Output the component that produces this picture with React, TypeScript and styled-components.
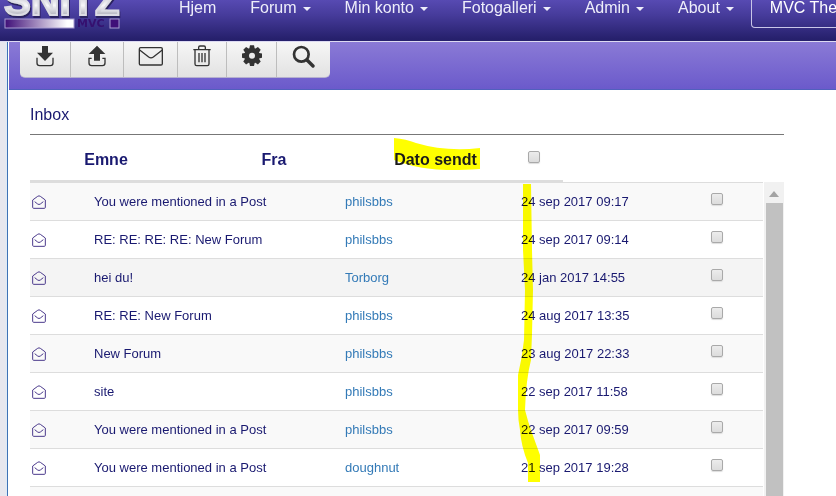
import React from "react";
import styled, { createGlobalStyle } from "styled-components";

const GlobalStyle = createGlobalStyle`
  * { box-sizing: border-box; }
  html, body { margin: 0; padding: 0; }
  body {
    background: #fff;
    color: #191970;
    font-family: "Liberation Sans", Arial, sans-serif;
    font-size: 13px;
    overflow: hidden;
  }
`;

const Page = styled.div`
  display: flex;
  flex-direction: column;
  height: 100vh;
  overflow: hidden;
`;

const NavBar = styled.nav`
  display: flex;
  align-items: flex-start;
  flex: none;
  height: 42px;
  overflow: hidden;
  background: linear-gradient(#574ab2, #473c9c 35%, #26206c 95%);
  border-bottom: 1px solid #dcdaf2;
`;

const Brand = styled.a`
  flex: none;
  width: 162px;
  height: 41px;
  svg { display: block; }
`;

const NavLink = styled.a`
  display: flex;
  align-items: center;
  flex: none;
  gap: 6px;
  padding: 0 17px;
  color: #eeeefa;
  font-size: 16px;
  line-height: 16px;
  text-decoration: none;
  white-space: nowrap;
`;

const Caret = styled.span`
  margin-top: 2px;
  border: 4px solid transparent;
  border-top-color: currentColor;
  border-bottom: 0;
`;

const ThemeButton = styled.button`
  flex: none;
  width: 120px;
  height: 28px;
  padding: 0 0 11px 18px;
  border: 1px solid #c9c6e8;
  border-top: 0;
  border-radius: 0 0 4px 4px;
  background: transparent;
  color: #fff;
  font: 16px/16px "Liberation Sans", Arial, sans-serif;
  text-align: left;
`;

const Frame = styled.div`
  display: flex;
  flex: 1;
  min-height: 0;
  padding-left: 7px;
  background: linear-gradient(90deg, #e7e7ee 5px, #dcebf8 7px);
`;

const Content = styled.main`
  display: flex;
  flex-direction: column;
  flex: 1;
  min-width: 0;
  background: #fff;
  border-left: 1px solid #3f72b5;
`;

const Band = styled.div`
  flex: none;
  height: 48px;
  margin-left: 1px;
  padding-left: 11px;
  background: linear-gradient(#8a7ad6, #6b5acb);
  border-bottom: 1px solid #5160bd;
`;

const Toolbar = styled.div`
  display: inline-flex;
  height: 36px;
  overflow: hidden;
  border-radius: 0 0 5px 5px;
  background: linear-gradient(#f6f6f6, #e2e2e2);
  border-bottom: 1px solid #b5b0cf;
`;

const ToolButton = styled.button<{ $width: number }>`
  display: flex;
  align-items: flex-start;
  justify-content: center;
  width: ${(p) => p.$width}px;
  padding: 3px 0 0;
  border: 0;
  border-right: 1px solid #bdbdbd;
  background: transparent;
  color: #333;
  &:last-child { border-right: 0; }
  svg { flex: none; }
`;

const Box = styled.section`
  display: flex;
  flex-direction: column;
  flex: 1;
  min-height: 0;
  padding: 15px 52px 0 22px;
`;

const Title = styled.h1`
  flex: none;
  margin: 0;
  padding-bottom: 9px;
  border-bottom: 1px solid #777;
  font-size: 16px;
  line-height: 20px;
  font-weight: 400;
`;

const HeadTable = styled.table`
  flex: none;
  width: 533px;
  table-layout: fixed;
  border-collapse: separate;
  border-spacing: 0;
`;

const HeadCell = styled.th<{ $width: number; $dark?: boolean }>`
  width: ${(p) => p.$width}px;
  height: 48px;
  padding: 4px 0 0;
  border-bottom: 3px solid #ddd;
  font-size: 16px;
  line-height: 20px;
  text-align: center;
  color: ${(p) => (p.$dark ? "#1a1a1a" : "inherit")};
`;

const Marked = styled.span`
  position: relative;
  display: inline-block;
  svg { position: absolute; left: 0; top: -12px; }
`;

const MarkedText = styled.span`
  position: relative;
`;

const CheckBox = styled.input.attrs({ type: "checkbox" })`
  appearance: none;
  display: block;
  width: 12px;
  height: 12px;
  margin: 0 auto 6px;
  border: 1px solid #a9a9a9;
  border-radius: 2px;
  background: linear-gradient(#ececec, #dcdcdc);
  box-shadow: 0 1px 1px #ddd;
`;

const Scroller = styled.div`
  position: relative;
  display: flex;
  flex: 1;
  min-height: 0;
  margin-top: -1px;
  overflow: hidden;
`;

const MailTable = styled.table`
  flex: 1;
  align-self: flex-start;
  min-width: 0;
  table-layout: fixed;
  border-collapse: separate;
  border-spacing: 0;
`;

const MailRow = styled.tr<{ $tone: string }>`
  background: ${(p) => p.$tone};
`;

const Cell = styled.td<{ $width?: number }>`
  width: ${(p) => (p.$width ? `${p.$width}px` : "auto")};
  height: 38px;
  padding: 1px 8px 0;
  border-top: 1px solid #ddd;
  line-height: 18px;
  white-space: nowrap;
  vertical-align: middle;
`;

const IconCell = styled(Cell)`
  padding: 1px 0 0 2px;
  svg { display: block; }
`;

const UserLink = styled.a`
  color: #337ab7;
  text-decoration: none;
`;

const DateStroke = styled.svg`
  position: absolute;
  left: 486px;
  top: 2px;
  mix-blend-mode: multiply;
  pointer-events: none;
`;

const ScrollTrack = styled.div`
  display: flex;
  flex-direction: column;
  flex: none;
  align-items: center;
  width: 20px;
  margin-left: 1px;
  background: #f1f1f1;
`;

const ScrollUp = styled.button`
  flex: none;
  display: flex;
  align-items: center;
  justify-content: center;
  width: 20px;
  height: 21px;
  padding: 2px 0 0;
  border: 0;
  background: transparent;
`;

const ScrollThumb = styled.div`
  flex: 1;
  width: 17px;
  background: #c1c1c1;
`;

const Logo = () => (
  <svg width="124" height="32" viewBox="0 0 124 32" role="img" aria-label="Snitz MVC">
    <defs>
      <linearGradient id="metal" x1="0" y1="0" x2="0" y2="1">
        <stop offset="0.3" stopColor="#bcbcc8" />
        <stop offset="0.6" stopColor="#f7f7f9" />
        <stop offset="0.8" stopColor="#b9b9c4" />
      </linearGradient>
      <linearGradient id="fade">
        <stop offset="0" stopColor="#3f0f78" />
        <stop offset="0.9" stopColor="#fff" />
      </linearGradient>
      <filter id="shade" x="-5%" y="-5%" width="115%" height="115%">
        <feDropShadow dx="1" dy="2" stdDeviation="0.6" floodColor="#2b2360" />
      </filter>
    </defs>
    <text x="4" y="15" fontFamily="Liberation Sans, Arial, sans-serif" fontWeight="700" fontSize="40" fill="url(#metal)" stroke="#dcdce4" strokeWidth="2" filter="url(#shade)">SNITZ</text>
    <rect x="5" y="19" width="69" height="9" fill="url(#fade)" stroke="#a79bd0" />
    <text x="77" y="27" fontFamily="DejaVu Sans, sans-serif" fontWeight="700" fontSize="11" fill="#35106f">MVC</text>
    <rect x="110" y="19" width="9" height="9" fill="#3f0f78" stroke="#a79bd0" />
  </svg>
);

const DownloadIcon = () => (
  <svg width="18" height="22" viewBox="0 0 54 66">
    <path d="M18 3h18v20h15L27 48 3 23h15z" fill="currentColor" />
    <path d="M3 38v16q0 8 8 8h32q8 0 8-8V38" fill="none" stroke="currentColor" strokeWidth="4" />
  </svg>
);

const UploadIcon = () => (
  <svg width="18" height="22" viewBox="0 0 54 66">
    <path d="M27 2l25 25H36v20H18V27H2z" fill="currentColor" />
    <path d="M11 40H3v14q0 8 8 8h32q8 0 8-8V40h-8" fill="none" stroke="currentColor" strokeWidth="4" />
  </svg>
);

const MailIcon = () => (
  <svg width="26" height="24" viewBox="0 0 78 72">
    <rect x="4" y="8" width="69" height="52" rx="4" fill="none" stroke="currentColor" strokeWidth="4" />
    <path d="M5 15l27 21q7 5 14 0l27-21" fill="none" stroke="currentColor" strokeWidth="4" />
  </svg>
);

const TrashIcon = () => (
  <svg width="18" height="24" viewBox="0 0 54 72" fill="none" stroke="currentColor" strokeWidth="4">
    <path d="M1 14h52M17 13V7q0-4 4-4h12q4 0 4 4v6M6 15v42q0 5 5 5h32q5 0 5-5V15M18 24v28M27 24v28M36 24v28" />
  </svg>
);

const GearIcon = () => (
  <svg width="20" height="24" viewBox="0 0 60 72">
    <g fill="currentColor">
      {[0, 45, 90, 135].map((a) => (
        <path key={a} d="M24 1h12l3 14v34l-3 14H24l-3-14V15z" transform={`rotate(${a} 30 32)`} />
      ))}
      <circle cx="30" cy="32" r="23" />
    </g>
    <circle cx="30" cy="32" r="9" fill="#ececec" />
  </svg>
);

const SearchIcon = () => (
  <svg width="23" height="24" viewBox="0 0 69 72" fill="none" stroke="currentColor">
    <circle cx="28" cy="28" r="22" strokeWidth="8" />
    <path d="M45 45l18 18" strokeWidth="10" strokeLinecap="round" />
  </svg>
);

const OpenMailIcon = () => (
  <svg width="14" height="14" viewBox="0 0 42 42" fill="none" stroke="#4b3a8c" strokeWidth="3">
    <path d="M2 15L17 4q4-3 8 0l15 11v22q0 3-3 3H5q-3 0-3-3z" />
    <path d="M8 20l9 7q4 3 8 0l9-7" />
  </svg>
);

const navItems = [
  { label: "Hjem", menu: false },
  { label: "Forum", menu: true },
  { label: "Min konto", menu: true },
  { label: "Fotogalleri", menu: true },
  { label: "Admin", menu: true },
  { label: "About", menu: true },
];

const tools = [
  { name: "Download", width: 51, Icon: DownloadIcon },
  { name: "Upload", width: 53, Icon: UploadIcon },
  { name: "New message", width: 54, Icon: MailIcon },
  { name: "Delete", width: 49, Icon: TrashIcon },
  { name: "Settings", width: 50, Icon: GearIcon },
  { name: "Search", width: 53, Icon: SearchIcon },
];

const messages = [
  { subject: "You were mentioned in a Post", from: "philsbbs", date: "24 sep 2017 09:17" },
  { subject: "RE: RE: RE: RE: New Forum", from: "philsbbs", date: "24 sep 2017 09:14" },
  { subject: "hei du!", from: "Torborg", date: "24 jan 2017 14:55", active: true },
  { subject: "RE: RE: New Forum", from: "philsbbs", date: "24 aug 2017 13:35" },
  { subject: "New Forum", from: "philsbbs", date: "23 aug 2017 22:33" },
  { subject: "site", from: "philsbbs", date: "22 sep 2017 11:58" },
  { subject: "You were mentioned in a Post", from: "philsbbs", date: "22 sep 2017 09:59" },
  { subject: "You were mentioned in a Post", from: "doughnut", date: "21 sep 2017 19:28" },
];

const rowTone = (index: number, active?: boolean) =>
  active ? "#f4f4f4" : index % 2 === 0 ? "#f9f9f9" : "#fff";

export default function App() {
  return (
    <Page>
      <GlobalStyle />
      <NavBar>
        <Brand href="#"><Logo /></Brand>
        {navItems.map((item) => (
          <NavLink key={item.label} href="#">
            {item.label}
            {item.menu && <Caret />}
          </NavLink>
        ))}
        <ThemeButton>MVC The</ThemeButton>
      </NavBar>
      <Frame>
        <Content>
          <Band>
            <Toolbar>
              {tools.map(({ name, width, Icon }) => (
                <ToolButton key={name} $width={width} aria-label={name}><Icon /></ToolButton>
              ))}
            </Toolbar>
          </Band>
          <Box>
            <Title>Inbox</Title>
            <HeadTable>
              <thead>
                <tr>
                  <HeadCell $width={152}>Emne</HeadCell>
                  <HeadCell $width={184}>Fra</HeadCell>
                  <HeadCell $width={139} $dark>
                    <Marked>
                      <svg width="86" height="32" viewBox="0 0 86 32">
                        <path d="M0 0Q12 1 22 5Q52 14 86 10V31Q55 33 38 31Q18 29 0 22z" fill="#ff0" />
                      </svg>
                      <MarkedText>Dato sendt</MarkedText>
                    </Marked>
                  </HeadCell>
                  <HeadCell $width={58}><CheckBox aria-label="Select all" /></HeadCell>
                </tr>
              </thead>
            </HeadTable>
            <Scroller>
              <MailTable>
                <tbody>
                  {messages.map((m, i) => (
                    <MailRow key={i} $tone={rowTone(i, m.active)}>
                      <IconCell $width={56}><OpenMailIcon /></IconCell>
                      <Cell $width={251}>{m.subject}</Cell>
                      <Cell $width={176}><UserLink href="#">{m.from}</UserLink></Cell>
                      <Cell>{m.date}</Cell>
                      <Cell $width={92}><CheckBox aria-label={`Select ${m.subject}`} /></Cell>
                    </MailRow>
                  ))}
                  <MailRow $tone={rowTone(messages.length)}><Cell colSpan={5} /></MailRow>
                </tbody>
              </MailTable>
              <DateStroke width="26" height="298" viewBox="0 0 26 298">
                <path d="M7 0H15L16 66L17 106L16 150L15 176Q10 195 9 226Q12 238 16 249L24 271V298H12V279Q5 262 4 246Q2 236 2 226V191Q6 174 8 156L9 106L7 66z" fill="#ff0" />
              </DateStroke>
              <ScrollTrack>
                <ScrollUp aria-label="Scroll up">
                  <svg width="10" height="6" viewBox="0 0 10 6"><path d="M5 0l5 6H0z" fill="#a3a3a3" /></svg>
                </ScrollUp>
                <ScrollThumb />
              </ScrollTrack>
            </Scroller>
          </Box>
        </Content>
      </Frame>
    </Page>
  );
}
